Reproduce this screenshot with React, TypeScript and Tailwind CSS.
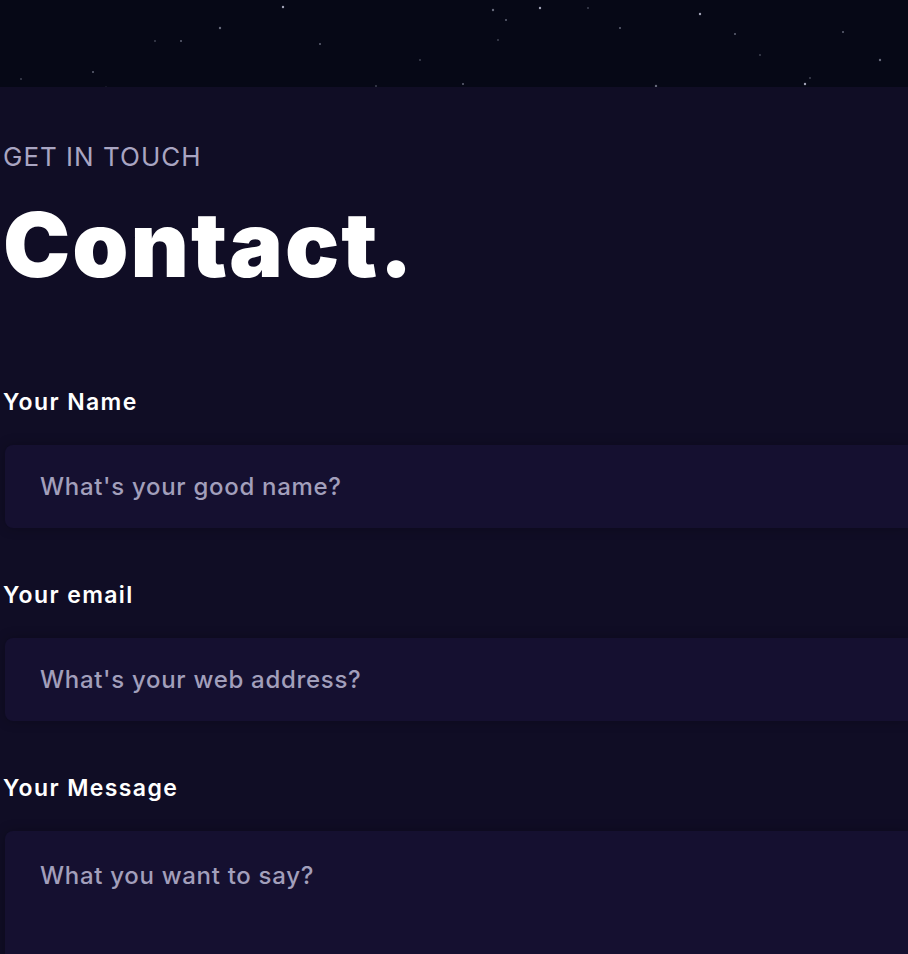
const stars = [
  [283, 7], [155, 41], [181, 41], [220, 28], [93, 72], [21, 79], [106, 88], [376, 86], [463, 84], [493, 10], [506, 20], [498, 40], [540, 8],
  [588, 8], [620, 28], [656, 86], [735, 34], [760, 55], [805, 84], [810, 78], [843, 32], [880, 60], [320, 44], [420, 60], [700, 14],
]

const Field = ({ label, placeholder, tall }: { label: string; placeholder: string; tall?: boolean }) => (
  <label className="flex flex-col">
    <span className="text-white font-semibold text-[23px] leading-[30px] tracking-[1.4px]">{label}</span>
    <div
      className={`mt-[28px] ml-[2px] rounded-l-lg bg-[#151030] px-[35px] text-[24px] leading-[30px] tracking-[0.7px] text-[#a29fbb] font-medium shadow-[0_0_12px_rgba(0,0,0,0.25)] ${
        tall ? 'h-[160px] pt-[30px]' : 'h-[83px] flex items-center'
      }`}
    >
      {placeholder}
    </div>
  </label>
)

const App = () => {
  return (
    <div className="w-[908px] h-[954px] overflow-hidden bg-[#100d25]" style={{ fontFamily: 'Inter, "Open Sans", sans-serif' }}>
      <div className="relative h-[87px] bg-[#060816]">
        <svg className="absolute inset-0" width="908" height="87">
          {stars.map(([x, y], i) => (
            <circle key={i} cx={x} cy={y} r={i % 3 === 0 ? 1.2 : 0.8} fill="#c8cbe0" opacity={i % 2 ? 0.5 : 0.8} />
          ))}
        </svg>
      </div>
      <div className="bg-[#100d25] pl-[3px] pt-[55px]">
        <p className="uppercase text-[#a9a5c2] text-[26px] leading-[30px] tracking-[1px]">Get in touch</p>
        <h2 className="mt-[28px] text-white font-black text-[90px] leading-[90px] tracking-[2px]">Contact.</h2>
        <div className="mt-[97px] flex flex-col gap-[52px]">
          <Field label="Your Name" placeholder="What's your good name?" />
          <Field label="Your email" placeholder="What's your web address?" />
          <Field label="Your Message" placeholder="What you want to say?" tall />
        </div>
      </div>
    </div>
  )
}

export default App
